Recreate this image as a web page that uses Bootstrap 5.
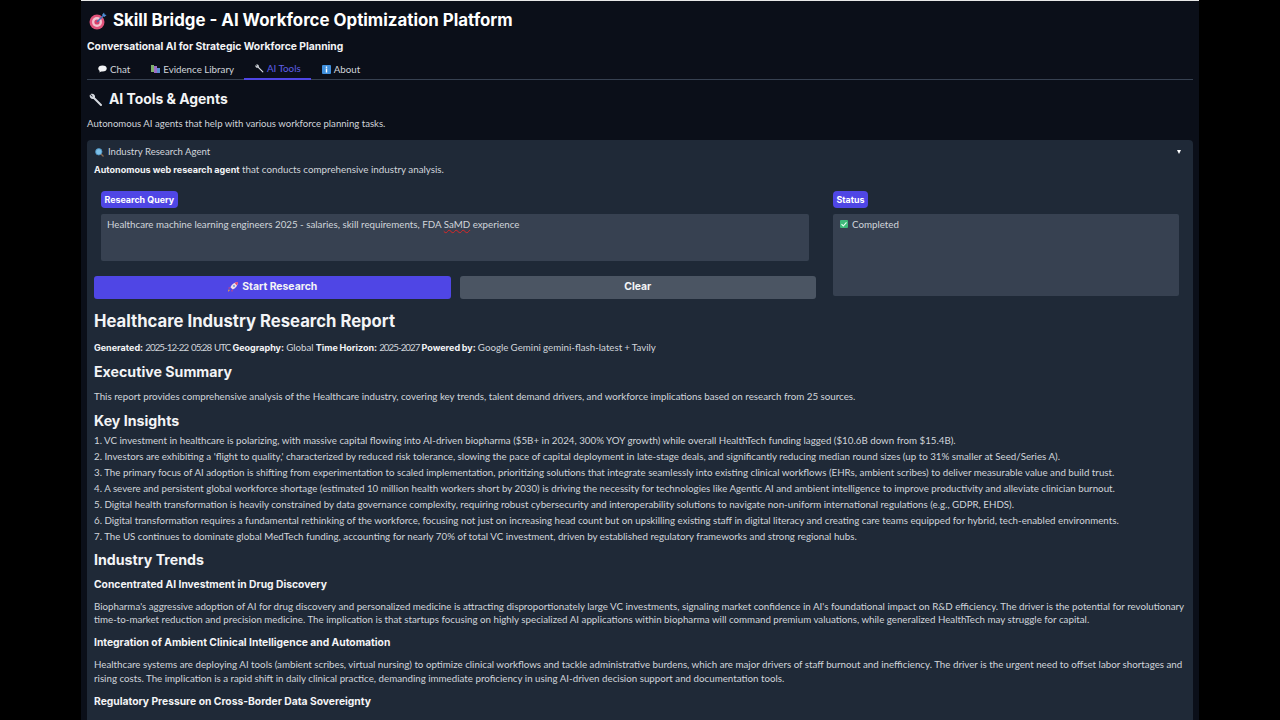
<!DOCTYPE html>
<html lang="en">
<head>
<meta charset="UTF-8" />
<title>Skill Bridge</title>
<link href="https://cdn.jsdelivr.net/npm/bootstrap@5.3.0/dist/css/bootstrap.min.css" rel="stylesheet" />
<style>
  html, body { height: 720px; overflow: hidden; background: #000; }
  body { font-family: Lato, "Liberation Sans", sans-serif; font-size: 10px; color: #e5e7eb; }
  h1, h2, h3, h4, .head { font-family: Inter, "Liberation Sans", sans-serif; font-weight: 700; color: #f3f4f6; margin: 0; }
  .app { width: 1118px; height: 720px; margin-left: 81px; background: #0b0f19; padding: 0 6px; border-top: 1.5px solid #e8e8e8; overflow: hidden; }
  .app-title { font-size: 16.85px; height: 39px; padding: 0 0 0 2px; gap: 6px; color: #fff; }
  .app-sub { font-size: 10.3px; height: 17px; line-height: 17px; color: #f3f4f6; margin-top: -2px; }
  .tabs { height: 22px; margin-top: 3px; border-bottom: 1px solid #374151; padding-left: .5px; }
  .tab { height: 22px; padding: 0 10.5px; gap: 3px; font-size: 9.75px; color: #d1d5db; margin-bottom: -1px; }
  .tab.active { color: #5f5fe8; border-bottom: 2px solid #4f46e5; }
  .section-title { font-size: 13.9px; height: 39px; gap: 6px; padding-left: 2px; color: #f3f4f6; }
  .section-sub { height: 10px; line-height: 10px; margin: 0 0 11px; font-size: 9.6px; color: #d1d5db; }
  .panel { background: #1f2937; border-radius: 4px; padding: 4px 7px; height: 600px; }
  .panel-head { height: 14px; margin-top: 1px; padding-left: 1px; gap: 4px; font-size: 9.6px; color: #d1d5db; }
  .caret { width: 0; height: 0; border-left: 2.5px solid transparent; border-right: 2.5px solid transparent; border-top: 4px solid #fff; margin-right: 5px; }
  .panel-lead { height: 14px; line-height: 14px; margin: 3px 0 0; font-size: 9.8px; color: #d1d5db; }
  .panel-lead b, .report b { font-family: Inter, "Liberation Sans", sans-serif; font-weight: 700; font-size: 9px; color: #f3f4f6; }
  .tool-row { margin-top: 14.5px; gap: 17px; }
  .tool-left { width: 722px; }
  .tool-right { width: 346px; }
  .tag-wrap { padding-left: 7px; }
  .tag { display: inline-block; background: #4f46e5; color: #fff; font-family: Inter, "Liberation Sans", sans-serif; font-weight: 700; font-size: 8.9px; line-height: 17px; height: 17px; padding: 0 3.5px; border-radius: 4px; }
  .query { margin: 6px 7px 0; height: 47px; }
  .box { background: #374151; border-radius: 2px; padding: 3px 6px; font-size: 9.75px; line-height: 14px; color: #d1d5db; }
  .misspelt { text-decoration: underline wavy #dc2626 1px; }
  .status { margin-top: 6px; height: 82px; gap: 4px; padding-left: 7px; }
  .status-line { gap: 4px; height: 14px; }
  .actions { margin-top: 15px; gap: 9px; }
  .btn-tool { flex: 1; height: 23px; padding: 0; border: 0; border-radius: 3px; font-family: Inter, "Liberation Sans", sans-serif; font-weight: 700; font-size: 10.4px; color: #f3f4f6; gap: 3px; }
  .btn-run { background: #4f46e5; }
  .btn-clear { background: #4b5563; }
  .report { font-size: 9.75px; color: #d1d5db; }
  .report h1 { font-size: 16.7px; line-height: 20px; margin-top: 12.5px; }
  .report h2 { font-size: 14.2px; line-height: 16px; margin-top: 9.25px; }
  .report h3 { font-size: 10.3px; line-height: 14px; margin-top: 8.5px; }
  .report p { margin: 8.75px 0 0; line-height: 13.5px; }
  .report .meta { margin-top: 9.5px; word-spacing: -.4px; }
  .report .after-meta { margin-top: 10px; }
  .report .after-h2 { margin-top: 10.25px; }
  .report .trends { margin-top: 8px; }
  .report .trends + h3 { margin-top: 9.5px; }
  .num { letter-spacing: -.95px; word-spacing: 1.2px; }
  .insights { margin-top: 2.5px; }
  .insights div { height: 16px; line-height: 16px; white-space: nowrap; }
</style>
</head>
<body>
<div class="app">
  <h1 class="app-title d-flex align-items-center">
    <svg width="18" height="18" viewBox="0 0 18 18"><circle cx="8" cy="10" r="7.5" fill="#e0527a"/><circle cx="8" cy="10" r="5" fill="#f3c3d0"/><circle cx="8" cy="10" r="2.6" fill="#d93f6b"/><path d="M8 10 14.5 3.5" stroke="#3f6fb5" stroke-width="1.6"/><path d="M13 3l2-2.4.6 2 2 .5-2.3 2z" fill="#4f8fd6"/></svg>
    <span>Skill Bridge - AI Workforce Optimization Platform</span>
  </h1>
  <div class="app-sub head">Conversational AI for Strategic Workforce Planning</div>

  <div class="tabs d-flex">
    <div class="tab d-flex align-items-center">
      <svg width="9" height="8" viewBox="0 0 9 8"><ellipse cx="4.5" cy="3.5" rx="4.2" ry="3" fill="#f3f4f6"/><path d="M2 5.5 1.200 7.500 4 6z" fill="#f3f4f6"/></svg>
      <span>Chat</span>
    </div>
    <div class="tab d-flex align-items-center">
      <svg width="9" height="8" viewBox="0 0 9 8"><rect x="0" y="0" width="3" height="7" fill="#7fb06a"/><rect x="3" y="1" width="3" height="7" fill="#9a6cc4"/><rect x="6" y="3" width="3" height="5" fill="#5a8fd0"/></svg>
      <span>Evidence Library</span>
    </div>
    <div class="tab active d-flex align-items-center">
      <svg width="9" height="9" viewBox="0 0 13 13"><path d="M1 1.500 3 3.500 3.500 3 1.500 1C3 .2 5 .8 5.500 2.500 5.700 3.300 5.600 3.800 5.500 4.200L12 10.700C12.600 11.300 11.300 12.600 10.700 12L4.200 5.500C2.500 6 .3 4.500.6 2.400Z" fill="#d5d9df"/></svg>
      <span>AI Tools</span>
    </div>
    <div class="tab d-flex align-items-center">
      <svg width="9" height="9" viewBox="0 0 9 9"><rect width="9" height="9" rx="1" fill="#3f8fdc"/><rect x="3.800" y="3.500" width="1.400" height="4" fill="#fff"/><rect x="3.800" y="1.500" width="1.400" height="1.400" fill="#fff"/></svg>
      <span>About</span>
    </div>
  </div>

  <h2 class="section-title d-flex align-items-center">
    <svg width="14" height="14" viewBox="0 0 13 13"><path d="M1 1.500 3 3.500 3.500 3 1.500 1C3 .2 5 .8 5.500 2.500 5.700 3.300 5.600 3.800 5.500 4.200L12 10.700C12.600 11.300 11.300 12.600 10.700 12L4.200 5.500C2.500 6 .3 4.500.6 2.400Z" fill="#d5d9df"/></svg>
    <span>AI Tools &amp; Agents</span>
  </h2>
  <p class="section-sub">Autonomous AI agents that help with various workforce planning tasks.</p>

  <div class="panel">
    <div class="panel-head d-flex align-items-center">
      <svg width="9" height="9" viewBox="0 0 9 9"><circle cx="3.800" cy="3.800" r="3.200" fill="#7cc0e8" stroke="#4a8fc0" stroke-width=".8"/><path d="M6 6l2.500 2.500" stroke="#8a6a50" stroke-width="1.300"/></svg>
      <span class="flex-grow-1">Industry Research Agent</span>
      <span class="caret"></span>
    </div>
    <p class="panel-lead"><b>Autonomous web research agent</b> that conducts comprehensive industry analysis.</p>

    <div class="tool-row d-flex">
      <div class="tool-left">
        <div class="tag-wrap"><span class="tag">Research Query</span></div>
        <div class="box query">Healthcare machine learning engineers 2025 - salaries, skill requirements, FDA <span class="misspelt">SaMD</span> experience</div>
        <div class="actions d-flex">
          <button type="button" class="btn btn-tool btn-run d-flex align-items-center justify-content-center">
            <svg width="12" height="12" viewBox="0 0 12 12"><path d="M11 1C7.500 1.300 5 3 3.400 6.200L5.800 8.600C9 7 10.700 4.500 11 1z" fill="#efdfe8"/><path d="M11 1C9.700 1.100 8.500 1.500 7.600 2.100L9.900 4.400C10.500 3.500 10.900 2.300 11 1z" fill="#e2486f"/><circle cx="7" cy="5" r="1" fill="#6a9ad8"/><path d="M3.400 6.200 1 6.800 2.300 8zM5.800 8.600 5.200 11 4 9.700z" fill="#d9467a"/><path d="M3 9 1 11l.4-2.400z" fill="#f0a040"/></svg>
            <span>Start Research</span>
          </button>
          <button type="button" class="btn btn-tool btn-clear">Clear</button>
        </div>
      </div>
      <div class="tool-right">
        <span class="tag">Status</span>
        <div class="box status">
          <div class="status-line d-flex align-items-center">
            <svg width="8" height="8" viewBox="0 0 8 8"><rect width="8" height="8" rx="1" fill="#3fb97a"/><path d="M1.500 4.200 3.300 6 6.500 2.300" fill="none" stroke="#eafff2" stroke-width="1.100"/></svg>
            <span>Completed</span>
          </div>
        </div>
      </div>
    </div>

    <div class="report">
      <h1>Healthcare Industry Research Report</h1>
      <p class="meta"><b>Generated:</b> <span class="num">2025-12-22 05:28 UTC</span> <b>Geography:</b> Global <b>Time Horizon:</b> <span class="num">2025-2027</span> <b>Powered by:</b> Google Gemini gemini-flash-latest + Tavily</p>
      <h2 class="after-meta">Executive Summary</h2>
      <p class="after-h2">This report provides comprehensive analysis of the Healthcare industry, covering key trends, talent demand drivers, and workforce implications based on research from 25 sources.</p>
      <h2>Key Insights</h2>
      <div class="insights">
        <div>1. VC investment in healthcare is polarizing, with massive capital flowing into AI-driven biopharma ($5B+ in 2024, 300% YOY growth) while overall HealthTech funding lagged ($10.6B down from $15.4B).</div>
        <div>2. Investors are exhibiting a 'flight to quality,' characterized by reduced risk tolerance, slowing the pace of capital deployment in late-stage deals, and significantly reducing median round sizes (up to 31% smaller at Seed/Series A).</div>
        <div>3. The primary focus of AI adoption is shifting from experimentation to scaled implementation, prioritizing solutions that integrate seamlessly into existing clinical workflows (EHRs, ambient scribes) to deliver measurable value and build trust.</div>
        <div>4. A severe and persistent global workforce shortage (estimated 10 million health workers short by 2030) is driving the necessity for technologies like Agentic AI and ambient intelligence to improve productivity and alleviate clinician burnout.</div>
        <div>5. Digital health transformation is heavily constrained by data governance complexity, requiring robust cybersecurity and interoperability solutions to navigate non-uniform international regulations (e.g., GDPR, EHDS).</div>
        <div>6. Digital transformation requires a fundamental rethinking of the workforce, focusing not just on increasing head count but on upskilling existing staff in digital literacy and creating care teams equipped for hybrid, tech-enabled environments.</div>
        <div>7. The US continues to dominate global MedTech funding, accounting for nearly 70% of total VC investment, driven by established regulatory frameworks and strong regional hubs.</div>
      </div>
      <h2 class="trends">Industry Trends</h2>
      <h3>Concentrated AI Investment in Drug Discovery</h3>
      <p>Biopharma's aggressive adoption of AI for drug discovery and personalized medicine is attracting disproportionately large VC investments, signaling market confidence in AI's foundational impact on R&amp;D efficiency. The driver is the potential for revolutionary time-to-market reduction and precision medicine. The implication is that startups focusing on highly specialized AI applications within biopharma will command premium valuations, while generalized HealthTech may struggle for capital.</p>
      <h3>Integration of Ambient Clinical Intelligence and Automation</h3>
      <p>Healthcare systems are deploying AI tools (ambient scribes, virtual nursing) to optimize clinical workflows and tackle administrative burdens, which are major drivers of staff burnout and inefficiency. The driver is the urgent need to offset labor shortages and rising costs. The implication is a rapid shift in daily clinical practice, demanding immediate proficiency in using AI-driven decision support and documentation tools.</p>
      <h3>Regulatory Pressure on Cross-Border Data Sovereignty</h3>
    </div>
  </div>
</div>
<script src="https://cdn.jsdelivr.net/npm/bootstrap@5.3.0/dist/js/bootstrap.bundle.min.js"></script>
</body>
</html>
